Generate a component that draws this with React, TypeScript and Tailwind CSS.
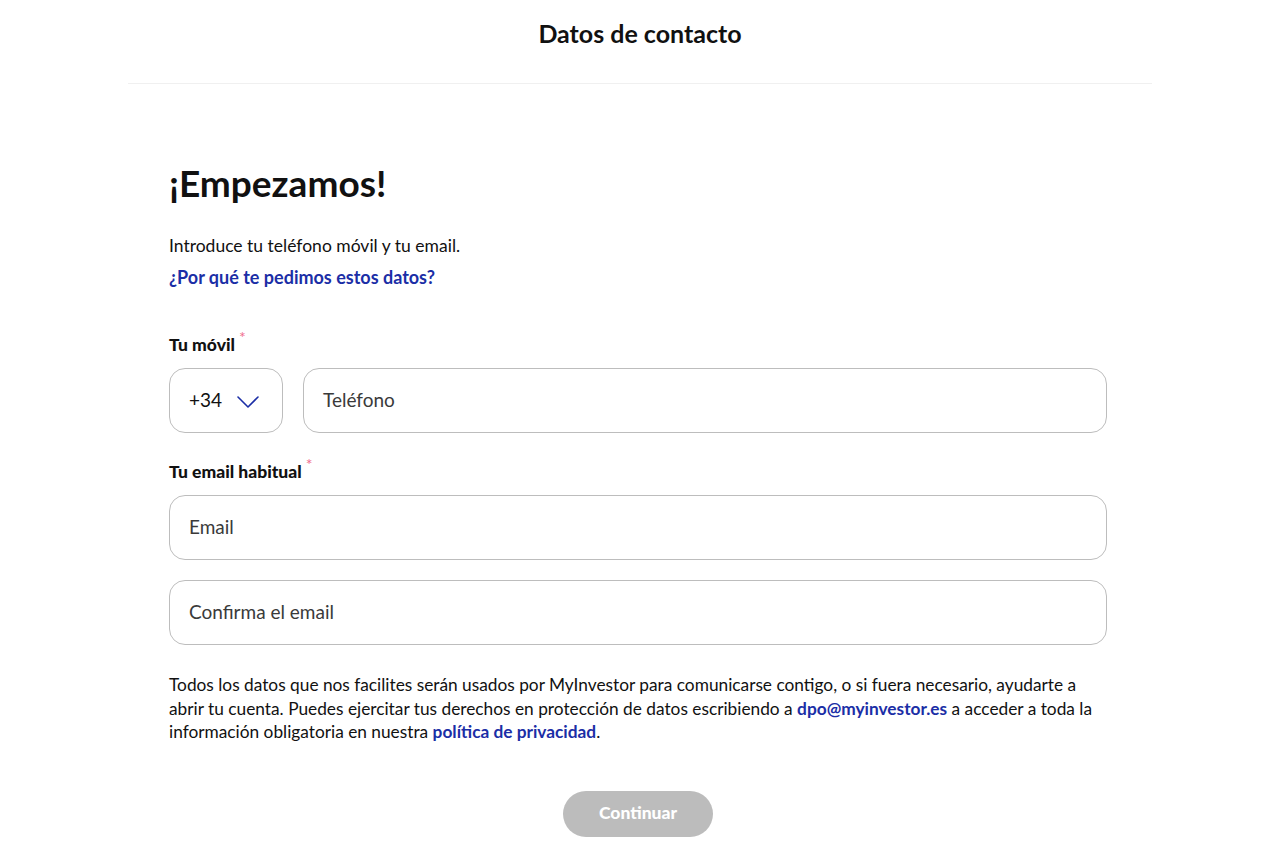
const font = { fontFamily: 'Lato, "Noto Sans", sans-serif' }

function Label({ children }: { children: React.ReactNode }) {
  return (
    <div className="flex items-start mb-[12px]">
      <span className="text-[17.5px] font-black text-[#111] leading-[22px]">{children}</span>
      <span className="ml-[4px] -mt-[5px] text-[16px] leading-none text-[#f06e8e]">*</span>
    </div>
  )
}

function Field({ placeholder }: { placeholder: string }) {
  return (
    <div className="flex-1 h-[65px] rounded-[16px] border border-[#bdbdbd] bg-white flex items-center px-[19px]">
      <span className="text-[19px] text-[#3a3a3a]">{placeholder}</span>
    </div>
  )
}

export default function App() {
  return (
    <div className="min-h-[850px] bg-white text-[#111]" style={font}>
      <header className="mx-auto w-[1024px] h-[84px] flex items-center justify-center border-b border-[#f0f0f0]">
        <h1 className="text-[25px] font-bold -mt-[16px]">Datos de contacto</h1>
      </header>

      <main className="ml-[169px] w-[938px] pt-[79px]">
        <h2 className="text-[37px] font-bold leading-[40px]">¡Empezamos!</h2>
        <p className="mt-[32px] text-[17.5px] leading-[22px]">Introduce tu teléfono móvil y tu email.</p>
        <a className="block mt-[9px] text-[18px] font-bold text-[#1b2ea6] leading-[22px]">¿Por qué te pedimos estos datos?</a>

        <div className="mt-[46px]">
          <Label>Tu móvil</Label>
          <div className="flex gap-[20px]">
            <div className="w-[114px] h-[65px] rounded-[16px] border border-[#bdbdbd] flex items-center pl-[19px] gap-[15px]">
              <span className="text-[19px] text-[#111]">+34</span>
              <svg width="22" height="12" viewBox="0 0 22 12" fill="none" className="mt-[2px]">
                <path d="M1 1 L11 11 L21 1" stroke="#1b2ea6" strokeWidth="1.6" strokeLinecap="round" strokeLinejoin="round" />
              </svg>
            </div>
            <Field placeholder="Teléfono" />
          </div>
        </div>

        <div className="mt-[28px]">
          <Label>Tu email habitual</Label>
          <div className="flex flex-col gap-[20px]">
            <div className="flex"><Field placeholder="Email" /></div>
            <div className="flex"><Field placeholder="Confirma el email" /></div>
          </div>
        </div>

        <p className="mt-[28px] text-[17.3px] leading-[23.5px] text-[#111]">
          Todos los datos que nos facilites serán usados por MyInvestor para comunicarse contigo, o si fuera necesario, ayudarte a abrir tu cuenta. Puedes ejercitar tus derechos en protección de datos escribiendo a{' '}
          <a className="font-bold text-[#1b2ea6]">dpo@myinvestor.es</a> a acceder a toda la información obligatoria en nuestra{' '}
          <a className="font-bold text-[#1b2ea6]">política de privacidad</a>.
        </p>

        <div className="flex justify-center mt-[47px]">
          <button className="w-[150px] h-[46px] rounded-full bg-[#bcbcbc] text-white text-[17.5px] font-black">
            Continuar
          </button>
        </div>
      </main>
    </div>
  )
}
